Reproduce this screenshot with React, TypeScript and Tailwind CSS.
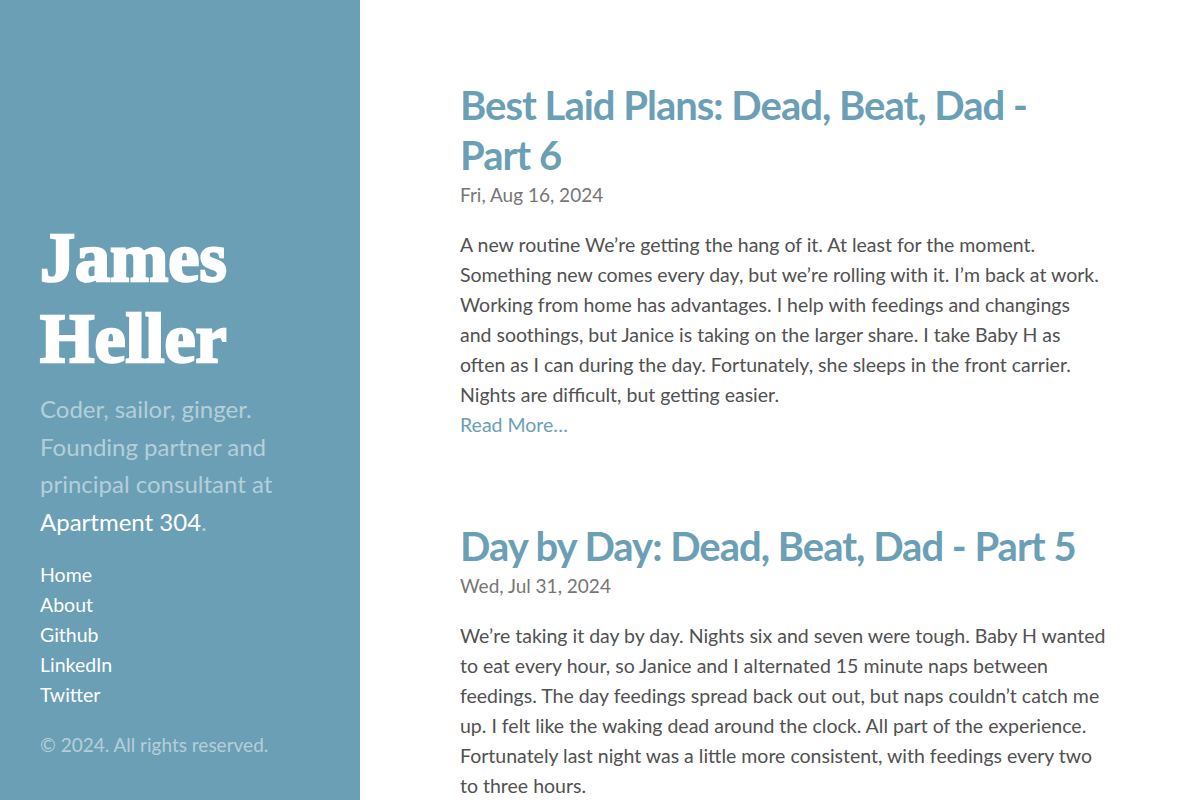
const posts = [
  {
    title: ["Best Laid Plans: Dead, Beat, Dad -", "Part 6"],
    date: "Fri, Aug 16, 2024",
    lines: [
      "A new routine We’re getting the hang of it. At least for the moment.",
      "Something new comes every day, but we’re rolling with it. I’m back at work.",
      "Working from home has advantages. I help with feedings and changings",
      "and soothings, but Janice is taking on the larger share. I take Baby H as",
      "often as I can during the day. Fortunately, she sleeps in the front carrier.",
      "Nights are difficult, but getting easier.",
    ],
    more: true,
  },
  {
    title: ["Day by Day: Dead, Beat, Dad - Part 5"],
    date: "Wed, Jul 31, 2024",
    lines: [
      "We’re taking it day by day. Nights six and seven were tough. Baby H wanted",
      "to eat every hour, so Janice and I alternated 15 minute naps between",
      "feedings. The day feedings spread back out out, but naps couldn’t catch me",
      "up. I felt like the waking dead around the clock. All part of the experience.",
      "Fortunately last night was a little more consistent, with feedings every two",
      "to three hours.",
    ],
    more: false,
  },
];

const nav = ["Home", "About", "Github", "LinkedIn", "Twitter"];

export default function App() {
  return (
    <div className="flex h-[800px] w-[1200px] overflow-hidden bg-white font-['Lato','Noto_Sans',sans-serif]">
      <aside className="flex w-[360px] shrink-0 flex-col justify-end bg-[#6a9fb5] px-10 pb-10 text-white">
        <h1 className="font-['Liberation_Serif',serif] text-[70px] font-black leading-[81px] [-webkit-text-stroke:2.5px_white]">
          <span className="block">James</span>
          <span className="block">Heller</span>
        </h1>
        <p className="mt-[11px] text-[24px] leading-[37.5px] text-white/50">
          <span className="block">Coder, sailor, ginger.</span>
          <span className="block">Founding partner and</span>
          <span className="block">principal consultant at</span>
          <span className="block">
            <a className="text-white">Apartment 304</a>.
          </span>
        </p>
        <nav className="mt-5 flex flex-col text-[19.5px] leading-[30px]">
          {nav.map((n) => (
            <a key={n} className="text-white">
              {n}
            </a>
          ))}
        </nav>
        <p className="mt-5 text-[19px] leading-[30px] text-white/50">© 2024. All rights reserved.</p>
      </aside>
      <main className="flex-1 pl-[100px] pt-[80px] text-[19.5px] leading-[30px] text-[#515151]">
        {posts.map((p, i) => (
          <article key={i} className={i > 0 ? "mt-[81px]" : ""}>
            <h2 className="text-[40px] font-bold leading-[50px] tracking-[-1px] text-[#6a9fb5]">
              {p.title.map((t) => (
                <span key={t} className="block whitespace-nowrap">
                  {t}
                </span>
              ))}
            </h2>
            <div className="text-[19px] text-[#767676]">{p.date}</div>
            <p className="mt-5">
              {p.lines.map((l) => (
                <span key={l} className="block whitespace-nowrap">
                  {l}
                </span>
              ))}
            </p>
            {p.more && <a className="block text-[#6a9fb5]">Read More…</a>}
          </article>
        ))}
      </main>
    </div>
  );
}
